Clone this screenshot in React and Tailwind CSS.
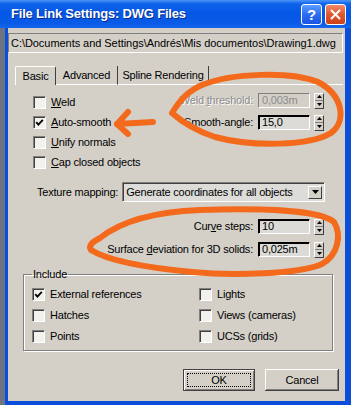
import React from "react";

function Check({ checked }) {
  return (
    <span className="flex h-[13px] w-[13px] shrink-0 items-center justify-center border border-t-[#808080] border-l-[#808080] border-r-white border-b-white bg-[#f2f1ec] shadow-[inset_1px_1px_0_#404040]">
      {checked && (
        <svg width="9" height="9" viewBox="0 0 9 9">
          <polyline points="1.2,4.2 3.4,6.6 7.8,1.8" fill="none" stroke="#000" strokeWidth="1.8" />
        </svg>
      )}
    </span>
  );
}

function CheckRow({ checked, children }) {
  return (
    <div className="flex h-[13px] items-center gap-[5px]">
      <Check checked={checked} />
      <span className="leading-[13px]">{children}</span>
    </div>
  );
}

function Spinner() {
  return (
    <div className="flex h-[16px] w-[10px] flex-col border border-t-white border-l-white border-r-[#404040] border-b-[#404040] bg-[#d4d0c8]">
      <div className="flex flex-1 items-center justify-center border-b border-b-[#808080]">
        <svg width="5" height="3" viewBox="0 0 5 3">
          <polygon points="2.5,0 5,3 0,3" fill="#000" />
        </svg>
      </div>
      <div className="flex flex-1 items-center justify-center">
        <svg width="5" height="3" viewBox="0 0 5 3">
          <polygon points="0,0 5,0 2.5,3" fill="#000" />
        </svg>
      </div>
    </div>
  );
}

function SpinRow({ label, value, disabled }) {
  return (
    <div className="flex h-[15px] items-center justify-end">
      <span
        className={
          disabled
            ? "mr-[5px] text-[#8c8c8c] [text-shadow:1px_1px_0_#fff]"
            : "mr-[5px]"
        }
      >
        {label}
      </span>
      <div
        className={
          disabled
            ? "h-[15px] w-[52px] border border-t-[#808080] border-l-[#808080] border-r-white border-b-white bg-[#d4d0c8] pl-[3px] leading-[13px] text-[#8c8c8c]"
            : "h-[15px] w-[52px] border border-t-black border-l-black border-r-white border-b-white bg-[#dcdbd7] pl-[3px] leading-[13px] shadow-[inset_1px_1px_0_#000]"
        }
      >
        {value}
      </div>
      <div className="ml-[4px]">
        <Spinner />
      </div>
    </div>
  );
}

export default function App() {
  return (
    <div className="relative flex h-[405px] w-[351px] flex-col overflow-hidden bg-[#0b4ed9] font-['Liberation_Sans',Arial,sans-serif] text-[11px] tracking-[-0.2px] text-black">
      {/* Title bar */}
      <div className="flex h-[28px] shrink-0 items-center bg-[linear-gradient(180deg,#4a94f8_0%,#0d62ea_14%,#0456e4_50%,#0a5ce8_85%,#1767ee_100%)] pl-[11px] pr-[5px]">
        <span className="flex-1 text-[13px] font-bold tracking-[-0.2px] text-white [text-shadow:1px_1px_0_#0a2a8c]">
          File Link Settings: DWG Files
        </span>
        <div className="flex gap-[3px]">
          <div className="flex h-[21px] w-[21px] items-center justify-center rounded-[3px] border border-white bg-[linear-gradient(180deg,#5d9cff_0%,#2b6cf2_50%,#1a55e0_100%)] text-[15px] font-bold leading-none text-white">
            ?
          </div>
          <div className="flex h-[21px] w-[21px] items-center justify-center rounded-[3px] border border-white bg-[linear-gradient(180deg,#f0896a_0%,#e3572e_50%,#cc4119_100%)]">
            <svg width="11" height="11" viewBox="0 0 11 11">
              <path d="M1.5 1.5 L9.5 9.5 M9.5 1.5 L1.5 9.5" stroke="#fff" strokeWidth="2" strokeLinecap="round" />
            </svg>
          </div>
        </div>
      </div>

      {/* Body */}
      <div className="flex flex-1">
        <div className="w-[5px] bg-[#6f7483]" />
        <div className="flex flex-1 flex-col border-l-[3px] border-r-[6px] border-b-[4px] border-[#0b4ed9]">
          <div className="flex flex-1 flex-col bg-[#d4d0c8]">
            {/* Path */}
            <div className="mt-[5px] mr-[2px] flex h-[20px] items-center border border-t-[#808080] border-l-[#808080] border-r-white border-b-white pl-[2px] text-[11px] tracking-[-0.05px]">
              C:\Documents and Settings\Andrés\Mis documentos\Drawing1.dwg
            </div>

            {/* Tabs */}
            <div className="mt-[13px] ml-[7px] mr-[2px] flex h-[19px] items-end">
              <div className="flex h-[19px] w-[41px] items-center justify-center rounded-t-[2px] border-l border-t border-r border-l-white border-t-white border-r-[#404040]">
                Basic
              </div>
              <div className="flex h-[19px] w-[62px] items-center justify-center border-r border-b border-r-[#404040] border-b-white">
                Advanced
              </div>
              <div className="flex h-[19px] w-[91px] items-center justify-center border-r border-b border-r-[#404040] border-b-white">
                Spline Rendering
              </div>
              <div className="h-[19px] flex-1 border-b border-b-white" />
            </div>

            {/* Basic options */}
            <div className="flex items-start justify-between pr-[21px]">
              <div className="flex flex-col gap-[7px] pl-[25px] pt-[11px]">
                <CheckRow>
                  <u>W</u>eld
                </CheckRow>
                <CheckRow checked>
                  <u>A</u>uto-smooth
                </CheckRow>
                <CheckRow>
                  <u>U</u>nify normals
                </CheckRow>
                <CheckRow>
                  <u>C</u>ap closed objects
                </CheckRow>
              </div>
              <div className="flex flex-col gap-[7px] pt-[8px]">
                <SpinRow
                  disabled
                  value="0,003m"
                  label={
                    <>
                      Weld <u>t</u>hreshold:
                    </>
                  }
                />
                <SpinRow value="15,0" label="Smooth-angle:" />
              </div>
            </div>

            {/* Texture mapping */}
            <div className="mt-[13px] flex items-center pl-[29px] pr-[20px]">
              <span className="mr-[4px]">Texture mapping:</span>
              <div className="flex h-[20px] flex-1 items-center border border-t-[#808080] border-l-[#808080] border-r-white border-b-white bg-[#dddcd8] pl-[3px] pr-[2px] shadow-[inset_1px_1px_0_#404040]">
                <span className="flex-1">Generate coordinates for all objects</span>
                <div className="flex h-[13px] w-[14px] items-center justify-center border border-t-white border-l-white border-r-[#404040] border-b-[#404040] bg-[#d4d0c8]">
                  <svg width="7" height="4" viewBox="0 0 7 4">
                    <polygon points="0,0 7,0 3.5,4" fill="#000" />
                  </svg>
                </div>
              </div>
            </div>

            {/* Curve steps */}
            <div className="mt-[17px] flex flex-col gap-[8px] pr-[21px]">
              <SpinRow
                value="10"
                label={
                  <>
                    Cur<u>v</u>e steps:
                  </>
                }
              />
              <SpinRow
                value="0,025m"
                label={
                  <>
                    Surface <u>d</u>eviation for 3D solids:
                  </>
                }
              />
            </div>

            {/* Include */}
            <fieldset className="mt-[11px] ml-[15px] mr-[12px] border border-[#808080] pb-[7px] pl-[8px] pt-[7px] shadow-[1px_1px_0_#fff,inset_1px_1px_0_#fff]">
              <legend className="px-[1px] leading-[13px]">Include</legend>
              <div className="grid grid-cols-[167px_1fr] gap-y-[8px]">
                <CheckRow checked>External references</CheckRow>
                <CheckRow>Lights</CheckRow>
                <CheckRow>Hatches</CheckRow>
                <CheckRow>Views (cameras)</CheckRow>
                <CheckRow>Points</CheckRow>
                <CheckRow>UCSs (grids)</CheckRow>
              </div>
            </fieldset>

            {/* Buttons */}
            <div className="mt-[18px] flex justify-end gap-[10px] pr-[6px]">
              <div className="flex h-[22px] w-[72px] border border-[#404040] bg-[#d4d0c8] p-[3px] shadow-[inset_1px_1px_0_#fff,inset_-1px_-1px_0_#808080]">
                <div className="flex flex-1 items-center justify-center border border-dotted border-black">
                  OK
                </div>
              </div>
              <div className="flex h-[22px] w-[74px] items-center justify-center bg-[#d4d0c8] shadow-[inset_-1px_-1px_0_#404040,inset_1px_1px_0_#fff,inset_-2px_-2px_0_#808080]">
                Cancel
              </div>
            </div>
          </div>
        </div>
      </div>

      {/* Orange annotations drawn over the dialog */}
      <svg
        className="pointer-events-none absolute inset-0"
        width="351"
        height="405"
        viewBox="0 0 351 405"
      >
        <g fill="none" stroke="#f36a1c" strokeWidth="6" strokeLinecap="round" strokeLinejoin="round">
          <path d="M318 82 C290 71, 232 73, 202 85 C188 91, 180 100, 172 113 C182 122, 194 130, 215 137 C252 147, 310 146, 331 133 C347 121, 343 95, 318 82" />
          <path d="M153 122 L117 124 M128 112 L117 124 L128 134" />
          <path d="M100 238 C120 222, 150 212, 200 210 C260 208, 320 210, 334 222 C342 235, 338 255, 322 264 C300 274, 232 276, 192 272 C150 268, 110 262, 91 250 C88 246, 92 242, 100 238" />
        </g>
      </svg>
    </div>
  );
}
